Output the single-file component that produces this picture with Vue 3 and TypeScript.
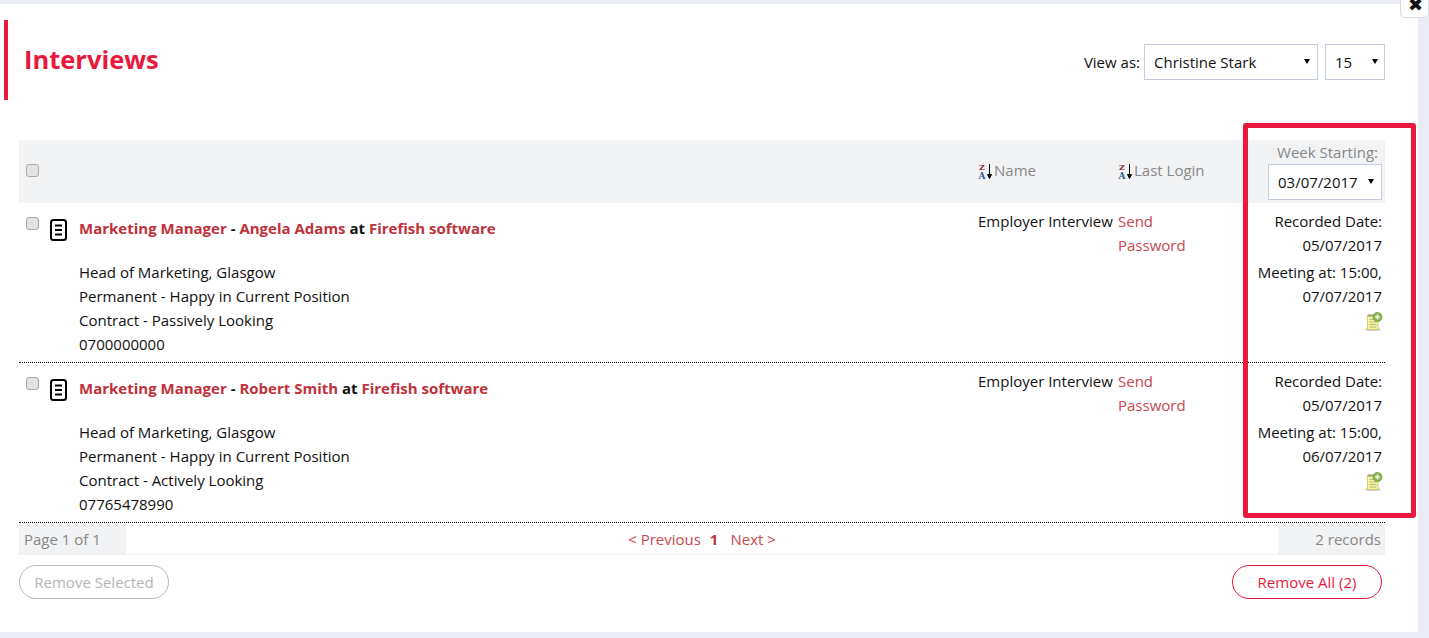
<script setup lang="ts">
interface Row {
  person: string
  status: string
  phone: string
  recorded: string
  meeting: string
  look: string
}
const rows: Row[] = [
  { person: 'Angela Adams', status: 'Happy in Current Position', look: 'Passively Looking', phone: '0700000000', recorded: '05/07/2017', meeting: '07/07/2017' },
  { person: 'Robert Smith', status: 'Happy in Current Position', look: 'Actively Looking', phone: '07765478990', recorded: '05/07/2017', meeting: '06/07/2017' },
]
</script>

<template>
  <div class="page">
    <main class="panel">
      <button class="close" type="button" aria-label="Close">✖</button>
      <header class="head">
        <h1>Interviews</h1>
        <div class="filters">
          <label>View as:</label>
          <span class="wrap viewer"><select class="sel"><option>Christine Stark</option></select></span>
          <span class="wrap count"><select class="sel"><option>15</option></select></span>
        </div>
      </header>

      <section class="table">
        <div class="thead">
          <div class="c-check"><input class="cb" type="checkbox" /></div>
          <div class="c-main"></div>
          <div class="c-type sort">
            <svg class="az" width="16" height="17" viewBox="0 0 16 17"><text x="1" y="7" class="z">Z</text><text x="0.500" y="16" class="a">A</text><path d="M11.500 1v13M9.500 11.500l2 4 2-4z" stroke="#000" stroke-width="1" fill="#000"/></svg>Name
          </div>
          <div class="c-login sort">
            <svg class="az" width="16" height="17" viewBox="0 0 16 17"><text x="1" y="7" class="z">Z</text><text x="0.500" y="16" class="a">A</text><path d="M11.500 1v13M9.500 11.500l2 4 2-4z" stroke="#000" stroke-width="1" fill="#000"/></svg>Last Login
          </div>
          <div class="c-week">
            <div class="week-label">Week Starting:</div>
            <span class="wrap week"><select class="sel"><option>03/07/2017</option></select></span>
          </div>
        </div>

        <article v-for="r in rows" :key="r.person" class="row">
          <div class="c-check"><input class="cb" type="checkbox" /></div>
          <div class="c-main">
            <div class="title">
              <svg class="doc" width="17" height="22" viewBox="0 0 17 22"><rect x="1" y="1" width="15" height="20" rx="2.500" fill="#fff" stroke="#000" stroke-width="2"/><path d="M5 6.500h7M5 11h7M5 15.500h7" stroke="#000" stroke-width="2"/></svg>
              <div class="title-text"><a>Marketing Manager</a> - <a>{{ r.person }}</a> at <a>Firefish software</a></div>
            </div>
            <div class="info">
              <div>Head of Marketing, Glasgow</div>
              <div>Permanent - {{ r.status }}</div>
              <div>Contract - {{ r.look }}</div>
              <div>{{ r.phone }}</div>
            </div>
          </div>
          <div class="c-type">Employer Interview</div>
          <div class="c-login"><a class="link">Send Password</a></div>
          <div class="c-week dates">
            <div>Recorded Date: {{ r.recorded }}</div>
            <div class="meet">Meeting at: 15:00, {{ r.meeting }}</div>
            <svg class="note" width="18" height="20" viewBox="0 0 18 20">
              <ellipse cx="8" cy="17.500" rx="8" ry="1.600" fill="#d2d2cc"/>
              <rect x="2.500" y="3.500" width="10.500" height="14" fill="#fbf59a" stroke="#cfc97f" stroke-width="1"/>
              <path d="M4.500 7.500h7M4.500 10h7M4.500 12.500h7M4.500 15h7" stroke="#b3b48c" stroke-width="1"/>
              <path d="M4 2v3M6 2v3M8 2v3" stroke="#888" stroke-width="1"/>
              <circle cx="12.500" cy="5" r="4.500" fill="#8cb84a" stroke="#6f9a33" stroke-width="0.800"/>
              <path d="M12.500 2.800v4.400M10.300 5h4.400" stroke="#fff" stroke-width="1.400"/>
            </svg>
          </div>
        </article>

        <footer class="pager">
          <div class="pg-left">Page 1 of 1</div>
          <div class="pg-mid"><a class="link">&lt; Previous</a><b>1</b><a class="link">Next &gt;</a></div>
          <div class="pg-right">2 records</div>
        </footer>
      </section>

      <div class="actions">
        <button class="pill off" type="button">Remove Selected</button>
        <button class="pill on" type="button">Remove All (2)</button>
      </div>

      <div class="callout" aria-hidden="true"></div>
    </main>
  </div>
</template>

<style>
html, body { margin: 0; padding: 0; background: #e9ecf4; overflow: hidden; }
</style>

<style scoped>
.page {
  height: 638px;
  padding: 4px 11px 6px 0;
  box-sizing: border-box;
  font: 15px/24px "Open Sans", sans-serif;
  color: #111;
  background: #e9ecf4;
}
.panel {
  position: relative;
  height: 628px;
  background: #fff;
  padding: 16px 33px 0 19px;
  box-sizing: border-box;
}
.close {
  position: absolute;
  top: -12px;
  right: -11px;
  width: 29px;
  height: 26px;
  padding: 0 0 0 2px;
  border: 1px solid #d7dbe6;
  border-radius: 0 0 5px 5px;
  background: #fff;
  color: #111;
  font: 18px/24px "DejaVu Sans", sans-serif;
  overflow: hidden;
}
.head {
  position: relative;
  display: flex;
  justify-content: space-between;
  align-items: flex-start;
  height: 80px;
  margin-bottom: 40px;
}
.head::before {
  content: "";
  position: absolute;
  left: -15px;
  top: 0;
  width: 4px;
  height: 80px;
  background: #e8193c;
}
h1 {
  margin: 0;
  padding: 19px 0 0 5px;
  color: #e8193c;
  font: 700 25.500px/40px "Open Sans", sans-serif;
}
.filters {
  display: flex;
  align-items: center;
  gap: 4px;
  padding-top: 24px;
}
.wrap {
  position: relative;
  display: block;
  height: 36px;
}
.wrap::after {
  content: "";
  position: absolute;
  top: 15px;
  right: 7px;
  border-style: solid;
  border-width: 5px 3px 0;
  border-color: #000 transparent transparent;
  pointer-events: none;
}
.sel {
  appearance: none;
  display: block;
  width: 100%;
  height: 36px;
  box-sizing: border-box;
  border: 1px solid #c5cee0;
  border-radius: 0;
  background: #fff;
  color: #111;
  font: 15px "Open Sans", sans-serif;
  padding: 0 9px;
}
.viewer { width: 174px; }
.viewer::after { right: 8px; }
.count { width: 60px; margin-left: 3px; }
.week { width: 114px; margin-left: auto; margin-right: 3px; }
.week::after { right: 8px; }
.week .sel { text-align: left; }

.table { width: 1366px; }
.thead, .row { display: flex; }
.thead {
  height: 63px;
  background: #f2f3f5;
  color: #888;
}
.thead .c-type, .thead .c-login { padding-top: 18px; }
.c-check { width: 59px; flex: none; padding-left: 7px; box-sizing: border-box; }
.thead .c-check { padding-top: 24px; }
.row .c-check { padding-top: 8px; }
.cb {
  appearance: none;
  display: block;
  width: 13px;
  height: 13px;
  margin: 0;
  background: #e3e3e3;
  border: 1px solid #ababab;
  border-radius: 3px;
}
.c-main { width: 900px; flex: none; }
.c-type { width: 140px; flex: none; white-space: nowrap; }
.c-login { width: 110px; flex: none; box-sizing: border-box; }
.row .c-login { padding-right: 20px; }
.c-week { flex: 1; text-align: right; padding-right: 3px; }
.thead .c-week { padding-right: 0; }
.week-label { padding-right: 7px; height: 24px; }
.sort { display: flex; align-items: flex-start; }
.az { margin-top: 5px; flex: none; margin-right: 0; }
.z { font: 700 8px "DejaVu Serif", serif; fill: #8c2f39; }
.a { font: 700 9px "DejaVu Serif", serif; fill: #2f5597; }

.row {
  height: 160px;
  box-sizing: border-box;
  border-bottom: 1px dotted #000;
  padding-top: 6px;
}
.row .c-main { margin-left: -29px; width: 929px; padding-top: 7px; }
.title { display: flex; align-items: flex-start; gap: 12px; }
.doc { margin-top: 3px; flex: none; margin-left: 1px; }
.title-text { font-weight: 700; }
.title-text a { color: #c0313c; }
.info { margin-top: 19px; margin-left: 30px; }
.link { color: #c8474f; }
.meet { margin-top: 3px; }
.note { display: block; margin: 4px -1px 0 auto; }

.pager {
  display: flex;
  height: 32px;
  line-height: 32px;
  border-bottom: 1px solid #f0f1f3;
  box-sizing: border-box;
  color: #888;
}
.pg-left { width: 107px; padding-left: 5px; box-sizing: border-box; background: #f2f3f5; }
.pg-mid { flex: 1; display: flex; justify-content: center; }
.pg-mid b { color: #c0313c; margin: 0 12px 0 9px; }
.pg-right { width: 107px; padding-right: 4px; box-sizing: border-box; text-align: right; background: #f2f3f5; }

.actions {
  display: flex;
  justify-content: space-between;
  margin-top: 10px;
  width: 1363px;
}
.pill {
  height: 34px;
  width: 150px;
  border-radius: 17px;
  background: #fff;
  font: 15px "Open Sans", sans-serif;
  padding: 0;
}
.off { border: 1px solid #b9b9bd; color: #b5b5b8; }
.on { border: 1px solid #e8193c; color: #e8193c; }

.callout {
  position: absolute;
  left: 1243px;
  top: 119px;
  width: 173px;
  height: 395px;
  box-sizing: border-box;
  border: 5px solid #e8193c;
  border-radius: 3px;
  pointer-events: none;
}
</style>
